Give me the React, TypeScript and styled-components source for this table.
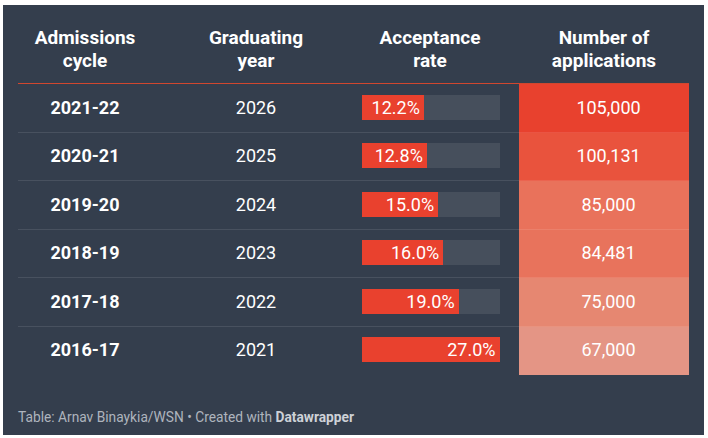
import React from "react";
import styled, { createGlobalStyle } from "styled-components";

const GlobalStyle = createGlobalStyle`
  html, body { margin: 0; padding: 0; background: #ffffff; }
  body { font-family: Roboto, "Liberation Sans", Arial, sans-serif; }
`;

const Panel = styled.div`
  box-sizing: border-box;
  margin: 5px 4px 0 3px;
  width: 701px;
  height: 430px;
  background: #343e4d;
  padding: 22px 15px 9px 15px;
  display: flex;
  flex-direction: column;
  color: #ffffff;
  font-family: Roboto, "Liberation Sans", Arial, sans-serif;
`;

const Table = styled.div`
  display: flex;
  flex-direction: column;
`;

const GridRow = styled.div`
  display: grid;
  grid-template-columns: 134px 208px 159px 170px;
`;

const HeadCell = styled.div<{ $shift?: number }>`
  box-sizing: border-box;
  font-size: 19px;
  font-weight: 700;
  line-height: 22.5px;
  text-align: center;
  padding: 0 ${(p) => (p.$shift ?? 0)}px 11px 0;
  border-bottom: 1px solid #d0472f;
`;

const Cell = styled.div<{ $last?: boolean; $bold?: boolean; $padRight?: number }>`
  box-sizing: border-box;
  height: 48.5px;
  display: flex;
  align-items: center;
  justify-content: center;
  font-size: 18px;
  font-weight: ${(p) => (p.$bold ? 700 : 400)};
  padding-right: ${(p) => p.$padRight ?? 0}px;
  padding-bottom: 1px;
  border-bottom: 1px solid ${(p) => (p.$last ? "transparent" : "rgba(255,255,255,0.1)")};
`;

const HeatCell = styled(Cell)<{ $bg: string }>`
  background: ${(p) => p.$bg};
  padding-left: 9px;
  border-bottom-color: ${(p) => (p.$last ? p.$bg : "rgba(255,255,255,0.1)")};
`;

const Track = styled.div`
  width: 138px;
  height: 25px;
  background: #464f5c;
  margin-left: 1px;
`;

const Fill = styled.div`
  height: 100%;
  background: #e9412e;
  display: flex;
  align-items: center;
  justify-content: flex-end;
  box-sizing: border-box;
  padding-right: 4px;
  font-size: 18px;
  white-space: nowrap;
`;

const Footer = styled.div`
  margin-top: auto;
  font-size: 13.75px;
  line-height: 18px;
  color: #aeb4bd;
`;

const Brand = styled.span`
  font-weight: 700;
  color: #cdd1d7;
`;

const rows = [
  { cycle: "2021-22", year: "2026", rate: 12.2, apps: "105,000", bg: "#e8412e" },
  { cycle: "2020-21", year: "2025", rate: 12.8, apps: "100,131", bg: "#e9533d" },
  { cycle: "2019-20", year: "2024", rate: 15.0, apps: "85,000", bg: "#e9725b" },
  { cycle: "2018-19", year: "2023", rate: 16.0, apps: "84,481", bg: "#e8735c" },
  { cycle: "2017-18", year: "2022", rate: 19.0, apps: "75,000", bg: "#e68771" },
  { cycle: "2016-17", year: "2021", rate: 27.0, apps: "67,000", bg: "#e49585" },
];

const MAX = 27;

export default function App() {
  return (
    <>
      <GlobalStyle />
      <Panel>
        <Table>
          <GridRow>
            <HeadCell>Admissions<br />cycle</HeadCell>
            <HeadCell>Graduating<br />year</HeadCell>
            <HeadCell $shift={19}>Acceptance<br />rate</HeadCell>
            <HeadCell>Number of<br />applications</HeadCell>
          </GridRow>
          {rows.map((r, i) => {
            const last = i === rows.length - 1;
            return (
              <GridRow key={r.cycle}>
                <Cell $bold $last={last}>{r.cycle}</Cell>
                <Cell $last={last}>{r.year}</Cell>
                <Cell $last={last} $padRight={19}>
                  <Track>
                    <Fill style={{ width: `${(r.rate / MAX) * 100}%` }}>
                      {r.rate.toFixed(1)}%
                    </Fill>
                  </Track>
                </Cell>
                <HeatCell $bg={r.bg} $last={last}>{r.apps}</HeatCell>
              </GridRow>
            );
          })}
        </Table>
        <Footer>
          Table: Arnav Binaykia/WSN • Created with <Brand>Datawrapper</Brand>
        </Footer>
      </Panel>
    </>
  );
}
